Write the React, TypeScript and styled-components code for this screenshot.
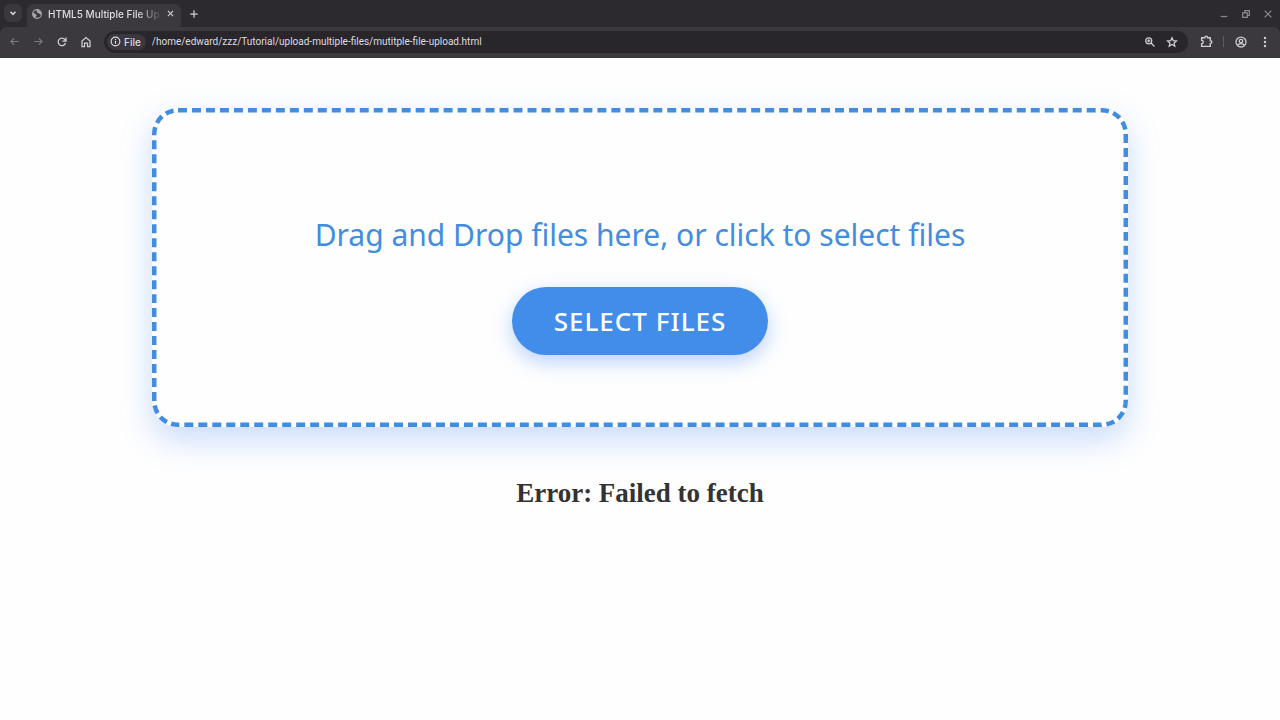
import React from "react";
import styled, { createGlobalStyle } from "styled-components";

const GlobalStyle = createGlobalStyle`
  *, *::before, *::after { box-sizing: border-box; }
  body {
    margin: 0;
    background: #fefefe;
    color: #333;
    font-family: Inter, "Liberation Sans", sans-serif;
  }
`;

const Browser = styled.header`
  background: #2c2a2e;
  font-size: 10px;
  line-height: 14px;
  color: #dedce0;
`;

const TabStrip = styled.div`
  display: flex;
  align-items: stretch;
  height: 27px;
`;

const ChromeButton = styled.button<{ $width?: number; $color?: string }>`
  display: inline-flex;
  align-items: center;
  justify-content: center;
  flex: none;
  width: ${(p) => p.$width ?? 22}px;
  padding: 0;
  border: 0;
  background: none;
  color: ${(p) => p.$color ?? "#d0ced2"};
`;

const TabSearch = styled(ChromeButton)`
  height: 18px;
  margin: 4px 5px 0 4px;
  border-radius: 6px;
  background: #3a383c;
`;

const Tab = styled.div`
  display: flex;
  align-items: center;
  gap: 6px;
  width: 154px;
  margin-top: 4px;
  padding: 0 4px 4px 5px;
  border-radius: 7px 7px 0 0;
  background: #3b393d;
`;

const TabTitle = styled.span`
  flex: 1;
  margin-right: -6px;
  white-space: nowrap;
  font-weight: 500;
  mask-image: linear-gradient(to right, #000 78%, rgba(0, 0, 0, 0.1) 98%);
`;

const WindowControls = styled.div`
  display: flex;
  margin-left: auto;
  padding-right: 1px;
`;

const Toolbar = styled.div`
  display: flex;
  align-items: center;
  height: 31px;
  padding: 0 2px 2px;
  border-radius: 7px 7px 0 0;
  background: #3b393d;
`;

const NavButton = styled(ChromeButton)`
  width: 24px;
  height: 24px;
`;

const AddressBar = styled.div`
  display: flex;
  align-items: center;
  flex: 1;
  height: 22px;
  margin: 0 7px 0 6px;
  padding: 0 5px 0 3px;
  border-radius: 11px;
  background: #28262a;
`;

const SchemeChip = styled.span`
  display: inline-flex;
  align-items: center;
  gap: 3px;
  height: 16px;
  padding: 0 5px 0 3px;
  border-radius: 8px;
  background: #3a383c;
  font-weight: 500;
`;

const Address = styled.input`
  flex: 1;
  min-width: 0;
  padding: 0 0 0 6px;
  border: 0;
  outline: 0;
  background: none;
  color: #dedce0;
  font-family: Roboto, Inter, sans-serif;
  font-size: 10px;
  line-height: 14px;
`;

const Divider = styled.span`
  width: 1px;
  height: 11px;
  margin: 0 6px;
  background: #5e5c61;
`;

const Main = styled.main`
  display: flex;
  flex-direction: column;
  align-items: center;
  padding: 50px 152px;
`;

const DropZone = styled.section`
  position: relative;
  display: flex;
  flex-direction: column;
  align-items: center;
  width: 100%;
  padding: 105px 40px 72px;
  border-radius: 26px;
  background: #fefefe;
  box-shadow: 0 13px 32px rgba(66, 133, 244, 0.28);
  color: #428de0;
`;

/* Only the inner half of the stroke shows, since the frame clips its outside. */
const DashedFrame = styled.svg`
  position: absolute;
  inset: 0;
  width: 100%;
  height: 100%;
  border-radius: 26px;
  overflow: hidden;
  pointer-events: none;
`;

const Prompt = styled.p`
  margin: 0 0 30px;
  font-family: "Noto Sans", "Open Sans", sans-serif;
  font-size: 30px;
  line-height: 44px;
`;

const SelectButton = styled.button`
  height: 68px;
  padding: 0 42px;
  border: 0;
  border-radius: 34px;
  background: #428dea;
  box-shadow: 0 7px 20px rgba(66, 133, 244, 0.36);
  color: #fff;
  font-family: "Noto Sans", "Open Sans", sans-serif;
  font-size: 26px;
  font-weight: 500;
  line-height: 36px;
  letter-spacing: 1px;
  text-transform: uppercase;
`;

const Status = styled.p`
  margin: 51px 0 0;
  font-family: "Liberation Serif", serif;
  font-size: 27px;
  font-weight: 700;
  line-height: 30px;
`;

const Icon = ({ size = 14, width = 2, children }: { size?: number; width?: number; children: React.ReactNode }) => (
  <svg width={size} height={size} viewBox="0 0 24 24" fill="none" stroke="currentColor" strokeWidth={width} aria-hidden="true">
    {children}
  </svg>
);

export default function App() {
  return (
    <>
      <GlobalStyle />
      <Browser>
        <TabStrip>
          <TabSearch $width={18} aria-label="Search tabs">
            <Icon size={10} width={4}><path d="M6 9l6 6 6-6" /></Icon>
          </TabSearch>
          <Tab>
            <Icon size={10} width={2.5}>
              <circle cx="12" cy="12" r="10.500" stroke="#aaa8ac" />
              <path d="M2 9c4-1 4 3 8 4 2 1 1 4-1 5l-1 4C4 20 1 16 2 9zM12 2c-2 3 1 4-1 6 2 3 6 0 7 4l4 2c1-6-3-12-10-12z" fill="#aaa8ac" stroke="none" />
            </Icon>
            <TabTitle>HTML5 Multiple File Up</TabTitle>
            <ChromeButton $width={14} aria-label="Close tab">
              <Icon size={9} width={3}><path d="M5 5l14 14M19 5L5 19" /></Icon>
            </ChromeButton>
          </Tab>
          <ChromeButton $width={26} aria-label="New tab">
            <Icon size={10} width={3}><path d="M12 3v18M3 12h18" /></Icon>
          </ChromeButton>
          <WindowControls>
            <ChromeButton $color="#8b898d" aria-label="Minimize">
              <Icon size={10} width={3}><path d="M4 18h16" /></Icon>
            </ChromeButton>
            <ChromeButton $color="#8b898d" aria-label="Restore">
              <Icon size={10} width={3}><path d="M4 9h11v11H4zM9 8V4h11v11h-4" /></Icon>
            </ChromeButton>
            <ChromeButton $color="#8b898d" aria-label="Close window">
              <Icon size={10} width={3}><path d="M4 4l16 16M20 4L4 20" /></Icon>
            </ChromeButton>
          </WindowControls>
        </TabStrip>
        <Toolbar>
          <NavButton $color="#7c7a7e" aria-label="Back">
            <Icon size={11} width={2.5}><path d="M21 12H4M11 5l-7 7 7 7" /></Icon>
          </NavButton>
          <NavButton $color="#7c7a7e" aria-label="Forward">
            <Icon size={11} width={2.5}><path d="M3 12h17M13 5l7 7-7 7" /></Icon>
          </NavButton>
          <NavButton aria-label="Reload">
            <Icon size={12} width={2.5}><path d="M19 14a7.500 7.500 0 1 1-1.500-7L20 9.500M20 3v7h-7" /></Icon>
          </NavButton>
          <NavButton aria-label="Home">
            <Icon size={12} width={2.5}><path d="M4 10l8-7 8 7v11h-5v-7H9v7H4z" /></Icon>
          </NavButton>
          <AddressBar>
            <SchemeChip>
              <Icon size={11} width={2.5}><circle cx="12" cy="12" r="9.500" /><path d="M12 11v6M12 6.500v2.500" /></Icon>
              File
            </SchemeChip>
            <Address aria-label="Address" type="text" defaultValue="/home/edward/zzz/Tutorial/upload-multiple-files/mutitple-file-upload.html" />
            <ChromeButton aria-label="Zoom">
              <Icon size={12} width={2.5}><circle cx="9.500" cy="9.500" r="6" /><path d="M14 14l7 7M9.500 6.500v6M6.500 9.500h6" /></Icon>
            </ChromeButton>
            <ChromeButton aria-label="Bookmark this page">
              <Icon size={12} width={2.5}><path d="M12 3.500l2.600 5.800 6.400.6-4.800 4.200 1.400 6.200-5.600-3.300-5.600 3.300 1.400-6.200L3 9.900l6.400-.6z" /></Icon>
            </ChromeButton>
          </AddressBar>
          <ChromeButton aria-label="Extensions">
            <Icon size={13} width={2.500}><path d="M3 5h6c0-4 5-4 5 0h5v5.500c4 0 4 5 0 5V21H3v-5c4 0 4-6 0-6z" /></Icon>
          </ChromeButton>
          <Divider />
          <ChromeButton aria-label="Profile">
            <Icon size={12} width={2.5}><circle cx="12" cy="12" r="10" /><circle cx="12" cy="10" r="3.500" /><path d="M5 19c3-5 11-5 14 0" /></Icon>
          </ChromeButton>
          <ChromeButton $width={26} aria-label="Menu">
            <Icon size={12}><g fill="currentColor" stroke="none"><circle cx="12" cy="4" r="2.400" /><circle cx="12" cy="12" r="2.400" /><circle cx="12" cy="20" r="2.400" /></g></Icon>
          </ChromeButton>
        </Toolbar>
      </Browser>
      <Main>
        <DropZone aria-label="File upload">
          <DashedFrame aria-hidden="true">
            <rect width="100%" height="100%" rx="26" fill="none" stroke="#428de0" strokeWidth="9" strokeDasharray="9 5" pathLength="2548" />
          </DashedFrame>
          <Prompt>Drag and Drop files here, or click to select files</Prompt>
          <SelectButton type="button">Select Files</SelectButton>
        </DropZone>
        <Status role="status">Error: Failed to fetch</Status>
      </Main>
    </>
  );
}
